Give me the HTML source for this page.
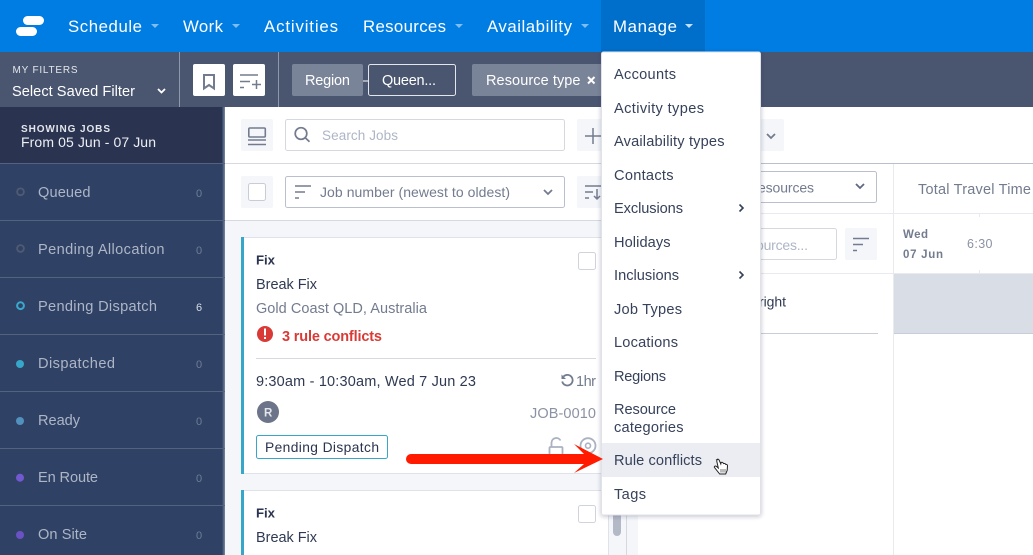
<!DOCTYPE html>
<html><head><meta charset="utf-8"><style>
html,body{margin:0;padding:0;width:1033px;height:555px;overflow:hidden;background:#fff}
svg{display:block}
text{font-family:"Liberation Sans",Arial,sans-serif;font-size:14.5px;fill:#2f3a52;white-space:pre}
.n{font-size:16.8px;fill:#fff}
.m{font-size:14.6px;fill:#36415a}
.s{font-size:14.6px;fill:#aeb5c6}
.c{font-size:11px;fill:#6f7c98}
</style></head><body>
<svg width="1033" height="555" viewBox="0 0 1033 555" xmlns="http://www.w3.org/2000/svg">
<defs>
<linearGradient id="sh" x1="0" x2="1" y1="0" y2="0"><stop offset="0" stop-color="#2f4265"/><stop offset="1" stop-color="#7d889e"/></linearGradient>
<filter id="ms" x="-10%" y="-5%" width="120%" height="110%"><feDropShadow dx="0" dy="1" stdDeviation="2" flood-color="#2a3350" flood-opacity=".3"/></filter>
</defs>
<!-- base -->
<rect width="1033" height="555" fill="#fff"/>
<!-- top nav -->
<rect width="1033" height="52" fill="#007de3"/>
<rect x="601" width="104" height="52" fill="#006fcb"/>
<rect x="23" y="16" width="21" height="9" rx="4.5" fill="#fff"/>
<rect x="16" y="27" width="21" height="9" rx="4.5" fill="#fff"/>
<text class="n" x="68" y="32" textLength="74" lengthAdjust="spacing">Schedule</text>
<path d="M151 24h8l-4 4z" fill="#7fbdf0"/>
<text class="n" x="183" y="32" textLength="40" lengthAdjust="spacing">Work</text>
<path d="M232 24h8l-4 4z" fill="#7fbdf0"/>
<text class="n" x="264" y="32" textLength="74" lengthAdjust="spacing">Activities</text>
<text class="n" x="363" y="32" textLength="83" lengthAdjust="spacing">Resources</text>
<path d="M455 24h8l-4 4z" fill="#7fbdf0"/>
<text class="n" x="487" y="32" textLength="85" lengthAdjust="spacing">Availability</text>
<path d="M581 24h8l-4 4z" fill="#7fbdf0"/>
<text class="n" x="613" y="32" textLength="64" lengthAdjust="spacing">Manage</text>
<path d="M685 24h8l-4 4z" fill="#c4e0f7"/>
<!-- filter bar -->
<rect y="52" width="1033" height="55" fill="#4a5670"/>
<rect x="179" y="52" width="1" height="55" fill="#8f98ab"/>
<rect x="278" y="52" width="1" height="55" fill="#8f98ab"/>
<text x="12.5" y="73" textLength="65" lengthAdjust="spacing" style="font-size:10px;fill:#e3e6ec">MY FILTERS</text>
<text x="12" y="96" textLength="123" lengthAdjust="spacing" style="font-size:14.6px;fill:#fff">Select Saved Filter</text>
<path d="M158 89l3.500 3.500 3.500-3.500" fill="none" stroke="#fff" stroke-width="1.800"/>
<rect x="193" y="64" width="32" height="32" rx="2" fill="#fff"/>
<path d="M204 75h10v13.500l-5-3.500-5 3.500z" fill="none" stroke="#737b8e" stroke-width="2"/>
<rect x="233" y="64" width="32" height="32" rx="2" fill="#fff"/>
<path d="M240 75h18M240 81.500h10M240 87.500h4M252 84.500h9M256.500 80v9" fill="none" stroke="#737b8e" stroke-width="1.500"/>
<rect x="292" y="64" width="71" height="32" rx="2" fill="#7a8499"/>
<text x="305" y="85" textLength="45" lengthAdjust="spacing" style="fill:#fff">Region</text>
<rect x="363" y="80.500" width="5" height="1" fill="#fff"/>
<rect x="368.500" y="64.500" width="87" height="31" rx="2" fill="#4a5670" stroke="#e3e6ec"/>
<text x="382" y="85" textLength="54" lengthAdjust="spacing" style="fill:#fff">Queen...</text>
<rect x="472" y="64" width="135" height="32" rx="2" fill="#7a8499"/>
<text x="486" y="85" textLength="94.500" lengthAdjust="spacing" style="fill:#fff">Resource type</text>
<path d="M588 77l6.500 6.500M594.500 77l-6.500 6.500" stroke="#fff" stroke-width="2"/>
<!-- sidebar -->
<rect y="107" width="225" height="448" fill="#2f4265"/>
<rect y="107" width="225" height="56" fill="#2a3350"/>
<rect x="222" y="107" width="3" height="448" fill="url(#sh)"/>
<text x="21" y="132" textLength="89" lengthAdjust="spacing" style="font-size:10px;font-weight:bold;fill:#e3e6ec">SHOWING JOBS</text>
<text x="21" y="147" textLength="135" lengthAdjust="spacing" style="font-size:14px;fill:#eef0f4">From 05 Jun - 07 Jun</text>
<g fill="#53627f">
<rect y="163" width="225" height="1"/><rect y="220" width="225" height="1"/><rect y="277" width="225" height="1"/><rect y="334" width="225" height="1"/><rect y="391" width="225" height="1"/><rect y="448" width="225" height="1"/><rect y="505" width="225" height="1"/>
</g>
<circle cx="20.500" cy="191.800" r="3.400" fill="none" stroke="#505b73" stroke-width="1.800"/>
<circle cx="20.500" cy="248.500" r="3.400" fill="none" stroke="#505b73" stroke-width="1.800"/>
<circle cx="20.500" cy="305.700" r="3.400" fill="none" stroke="#3aa9cc" stroke-width="2"/>
<circle cx="20" cy="364" r="4" fill="#37a6c8"/>
<circle cx="20" cy="421" r="4" fill="#5291bd"/>
<circle cx="20" cy="477.700" r="4" fill="#7259d0"/>
<circle cx="20" cy="535" r="4" fill="#6b52c4"/>
<text class="s" x="38" y="197" textLength="52.500" lengthAdjust="spacing">Queued</text>
<text class="s" x="38" y="254" textLength="126.500" lengthAdjust="spacing">Pending Allocation</text>
<text class="s" x="38" y="311" textLength="119" lengthAdjust="spacing">Pending Dispatch</text>
<text class="s" x="38" y="368" textLength="77" lengthAdjust="spacing">Dispatched</text>
<text class="s" x="38" y="425" textLength="42" lengthAdjust="spacing">Ready</text>
<text class="s" x="38" y="482" textLength="60" lengthAdjust="spacing">En Route</text>
<text class="s" x="38" y="539" textLength="49" lengthAdjust="spacing">On Site</text>
<text class="c" x="196" y="197">0</text>
<text class="c" x="196" y="254">0</text>
<text class="c" x="196" y="311" style="fill:#d8dce5">6</text>
<text class="c" x="196" y="368">0</text>
<text class="c" x="196" y="425">0</text>
<text class="c" x="196" y="482">0</text>
<text class="c" x="196" y="539">0</text>
<!-- middle toolbar -->
<rect x="225" y="163" width="376" height="1" fill="#d6d9e0"/>
<rect x="225" y="220" width="376" height="1" fill="#d6d9e0"/>
<rect x="241" y="119" width="32" height="32" rx="2" fill="#f4f6fa"/>
<rect x="248.800" y="128" width="16.500" height="9" rx="1" fill="none" stroke="#737b8e" stroke-width="1.600"/>
<path d="M248 140h18M248 144.500h18" stroke="#737b8e" stroke-width="1.600"/>
<rect x="285.500" y="119.500" width="279" height="31" rx="2" fill="#fff" stroke="#d5d8e0"/>
<circle cx="301" cy="133.500" r="5.800" fill="none" stroke="#737b8e" stroke-width="1.700"/>
<path d="M305.500 138l4 3.800" stroke="#737b8e" stroke-width="1.700"/>
<text x="322" y="140" textLength="76" lengthAdjust="spacing" style="font-size:13.500px;fill:#aeb5c6">Search Jobs</text>
<rect x="577" y="119" width="30" height="32" rx="2" fill="#f4f6fa"/>
<path d="M593 128v16M585 136h16" stroke="#737b8e" stroke-width="1.500"/>
<rect x="241" y="176" width="32" height="32" rx="2" fill="#f4f6fa"/>
<rect x="248.500" y="183.500" width="17" height="17" rx="2" fill="#fff" stroke="#c8ccd6"/>
<rect x="285.500" y="176.500" width="279" height="31" rx="2" fill="#fff" stroke="#b9bfcc"/>
<path d="M295 186h16M295 192h10M295 198h4" stroke="#737b8e" stroke-width="1.500"/>
<text x="320" y="197" textLength="190" lengthAdjust="spacing" style="font-size:14px;fill:#737b8e">Job number (newest to oldest)</text>
<path d="M544 190l4 4 4-4" fill="none" stroke="#737b8e" stroke-width="1.800"/>
<rect x="577" y="176" width="30" height="32" rx="2" fill="#f4f6fa"/>
<path d="M585 186h16M585 192h8M585 198h4M597 189v10M594 196l3 3 3-3" fill="none" stroke="#737b8e" stroke-width="1.500"/>
<!-- job list -->
<rect x="225" y="221" width="401" height="334" fill="#f4f6fa"/>
<rect x="608" y="221" width="1" height="334" fill="#e2e5ec"/>
<rect x="626" y="221" width="1" height="334" fill="#d6d9e0"/>
<rect x="627" y="221" width="11" height="334" fill="#f4f6fa"/>
<rect x="613" y="510" width="8" height="26" rx="4" fill="#b4b9c7"/>
<!-- card 1 -->
<rect x="241.500" y="237.500" width="367" height="236" fill="#fff" stroke="#dfe2e9"/>
<rect x="241" y="237" width="3" height="237" fill="#37a6c8"/>
<text x="256" y="264.500" textLength="19" lengthAdjust="spacing" style="font-size:13.200px;font-weight:bold;fill:#2a3350">Fix</text>
<text x="256" y="289" textLength="61" lengthAdjust="spacing">Break Fix</text>
<text x="256" y="313" textLength="171" lengthAdjust="spacing" style="fill:#737b8e">Gold Coast QLD, Australia</text>
<rect x="578.500" y="252.500" width="17" height="17" rx="2" fill="#fff" stroke="#cfd3dc"/>
<circle cx="265" cy="334" r="8" fill="#d93a35"/>
<rect x="264" y="328.500" width="2" height="7" fill="#fff"/>
<rect x="264" y="337" width="2" height="2" fill="#fff"/>
<text x="282" y="341" textLength="100" lengthAdjust="spacing" style="font-weight:bold;fill:#d93a35">3 rule conflicts</text>
<rect x="256" y="358" width="340" height="1" fill="#d6d9e0"/>
<text x="256" y="386" textLength="220" lengthAdjust="spacing">9:30am - 10:30am, Wed 7 Jun 23</text>
<path d="M563.500 376.500a5.300 5.300 0 1 1-1.300 5" fill="none" stroke="#737b8e" stroke-width="1.800"/>
<path d="M561.500 374.500v4.500h4.500z" fill="#737b8e"/>
<text x="576" y="386" textLength="20" lengthAdjust="spacing" style="fill:#737b8e">1hr</text>
<circle cx="268" cy="412" r="11" fill="#6b7488"/>
<text x="264" y="416.500" style="font-size:11.500px;font-weight:bold;fill:#e3e6ec">R</text>
<text x="530" y="418" textLength="66" lengthAdjust="spacing" style="fill:#8b92a3">JOB-0010</text>
<rect x="256.500" y="435.500" width="131" height="23" rx="2" fill="#fff" stroke="#37a6c8"/>
<text x="265" y="452" textLength="114" lengthAdjust="spacing" style="font-size:13.800px;fill:#2a3350">Pending Dispatch</text>
<rect x="549.500" y="447" width="13" height="12" rx="1" fill="none" stroke="#aab1c1" stroke-width="1.800"/>
<path d="M551.500 447v-4.500a4.800 4.800 0 0 1 9-2" fill="none" stroke="#aab1c1" stroke-width="1.800"/>
<circle cx="588" cy="445.700" r="7.500" fill="none" stroke="#aab1c1" stroke-width="1.800"/>
<circle cx="588" cy="445.700" r="2.500" fill="none" stroke="#aab1c1" stroke-width="1.600"/>
<!-- card 2 -->
<rect x="241.500" y="490.500" width="367" height="80" fill="#fff" stroke="#dfe2e9"/>
<rect x="241" y="490" width="3" height="65" fill="#37a6c8"/>
<text x="256" y="517.500" textLength="19" lengthAdjust="spacing" style="font-size:13.200px;font-weight:bold;fill:#2a3350">Fix</text>
<text x="256" y="542" textLength="61" lengthAdjust="spacing">Break Fix</text>
<rect x="578.500" y="505.500" width="17" height="17" rx="2" fill="#fff" stroke="#cfd3dc"/>
<!-- right panel -->
<rect x="638" y="221" width="395" height="334" fill="#fff"/>
<rect x="638" y="107" width="395" height="56" fill="#fff"/>
<rect x="752" y="119" width="32" height="32" rx="2" fill="#f4f6fa"/>
<path d="M767 134l4 4 4-4" fill="none" stroke="#737b8e" stroke-width="1.800"/>
<rect x="638" y="163" width="395" height="1" fill="#b9bfcc"/>
<rect x="893" y="164" width="1" height="391" fill="#e8eaef"/>
<rect x="638" y="213" width="395" height="1" fill="#e8eaef"/>
<rect x="638" y="273" width="395" height="1" fill="#e8eaef"/>
<rect x="700.500" y="171.500" width="176" height="31" rx="2" fill="#fff" stroke="#b9bfcc"/>
<text x="758" y="192.500" textLength="56" lengthAdjust="spacing" style="font-size:14px;fill:#737b8e">esources</text>
<path d="M856 184l4 4 4-4" fill="none" stroke="#5f6880" stroke-width="1.800"/>
<text x="918" y="194" textLength="113" lengthAdjust="spacing" style="fill:#737b8e">Total Travel Time</text>
<rect x="700.500" y="228.500" width="136" height="31" rx="2" fill="#fff" stroke="#d5d8e0"/>
<text x="756" y="250" textLength="52" lengthAdjust="spacing" style="font-size:14px;fill:#aeb5c6">ources...</text>
<rect x="845" y="228" width="32" height="32" rx="2" fill="#f4f6fa"/>
<path d="M853 238.500h16M853 244.500h10M853 250.500h4" stroke="#737b8e" stroke-width="1.500"/>
<text x="903" y="238" textLength="25" lengthAdjust="spacing" style="font-size:11.500px;font-weight:bold;fill:#737b8e">Wed</text>
<text x="903" y="258" textLength="40" lengthAdjust="spacing" style="font-size:11.500px;font-weight:bold;fill:#737b8e">07 Jun</text>
<text x="967" y="248" textLength="25.500" lengthAdjust="spacing" style="font-size:12.500px;fill:#8b92a3">6:30</text>
<rect x="979" y="214" width="1" height="3" fill="#e8eaef"/>
<rect x="979" y="270" width="1" height="3" fill="#e8eaef"/>
<rect x="894" y="274" width="139" height="59" fill="#d9dde5"/>
<rect x="894" y="333" width="139" height="1" fill="#c9cdd8"/>
<text x="759" y="306.500" textLength="27" lengthAdjust="spacing" style="font-size:14px">right</text>
<rect x="700" y="333" width="178" height="1" fill="#c9cdd8"/>
<!-- dropdown menu -->
<rect x="601.500" y="52" width="159" height="463" rx="2" fill="#fff" stroke="#dfe2e9" filter="url(#ms)"/>
<rect x="602" y="443" width="158" height="34" fill="#ecedf2"/>
<text class="m" x="614" y="79" textLength="62" lengthAdjust="spacing">Accounts</text>
<text class="m" x="614" y="113" textLength="90" lengthAdjust="spacing">Activity types</text>
<text class="m" x="614" y="146" textLength="110.500" lengthAdjust="spacing">Availability types</text>
<text class="m" x="614" y="180" textLength="59.500" lengthAdjust="spacing">Contacts</text>
<text class="m" x="614" y="213" textLength="69" lengthAdjust="spacing">Exclusions</text>
<text class="m" x="614" y="247" textLength="56.500" lengthAdjust="spacing">Holidays</text>
<text class="m" x="614" y="280" textLength="65" lengthAdjust="spacing">Inclusions</text>
<text class="m" x="614" y="314" textLength="68" lengthAdjust="spacing">Job Types</text>
<text class="m" x="614" y="347" textLength="64" lengthAdjust="spacing">Locations</text>
<text class="m" x="614" y="381" textLength="52" lengthAdjust="spacing">Regions</text>
<text class="m" x="614" y="414" textLength="62" lengthAdjust="spacing">Resource</text>
<text class="m" x="614" y="432" textLength="69.500" lengthAdjust="spacing">categories</text>
<text class="m" x="614" y="465" textLength="88" lengthAdjust="spacing">Rule conflicts</text>
<text class="m" x="614" y="499" textLength="32" lengthAdjust="spacing">Tags</text>
<path d="M739.500 204.500l3.500 3.500-3.500 3.500M739.500 271.500l3.500 3.500-3.500 3.500" fill="none" stroke="#36415a" stroke-width="1.600"/>
<!-- arrow -->
<path d="M411 454H584L574 444 603 459 574 473 584 464H411a5 5 0 0 1 0-10z" fill="#ff1a00"/>
<!-- hand cursor -->
<path d="M717 459.500c1-.8 2 0 2.300 1l1.500 3.500.3-1.500c1.200-.5 2 0 2.200.8l.3.300c1-.4 1.900 0 2.100.8 1-.2 1.800.3 1.800 1.300l-.3 4.600-1.500 3.700h-6l-5.200-6.500c-.6-1 .6-2 1.800-1.200l2 1.700-1.500-6.600c-.2-.8 0-1.400.7-1.900z" fill="#fff" stroke="#222" stroke-width="1"/>
<path d="M721 469v3.500M723 469v3.500M725 469v3.500" stroke="#555" stroke-width=".8"/>
</svg>
</body></html>
